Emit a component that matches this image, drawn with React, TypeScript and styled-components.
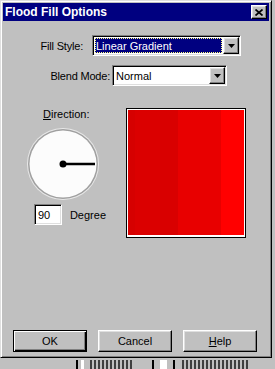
import React from "react";
import styled, { createGlobalStyle, css } from "styled-components";

const GlobalStyle = createGlobalStyle`
  html, body {
    margin: 0;
    padding: 0;
    background: #c0c0c0;
  }
  body {
    font-family: "Liberation Sans", Arial, sans-serif;
    font-size: 11px;
    color: #000;
  }
`;

const raised = css`
  border-top: 1px solid #fff;
  border-left: 1px solid #fff;
  border-right: 1px solid #000;
  border-bottom: 1px solid #000;
  box-shadow: inset -1px -1px #808080, inset 1px 1px #dfdfdf;
`;

const sunken = css`
  border-top: 1px solid #808080;
  border-left: 1px solid #808080;
  border-right: 1px solid #fff;
  border-bottom: 1px solid #fff;
  box-shadow: inset 1px 1px #000, inset -1px -1px #dfdfdf;
`;

const Screen = styled.div`
  width: 275px;
  height: 369px;
  overflow: hidden;
  display: flex;
  flex-direction: column;
`;

const Window = styled.div`
  width: 272px;
  height: 358px;
  flex: none;
  box-sizing: border-box;
  background: #c0c0c0;
  border-top: 1px solid #dfdfdf;
  border-left: 1px solid #dfdfdf;
  border-right: 1px solid #000;
  border-bottom: 1px solid #000;
  box-shadow: inset 1px 1px #fff, inset -1px -1px #808080;
  padding: 2px;
  display: flex;
  flex-direction: column;
`;

const TitleBar = styled.div`
  height: 18px;
  flex: none;
  background: #000080;
  color: #fff;
  display: flex;
  align-items: center;
  justify-content: space-between;
  padding: 0 2px 0 2px;
`;

const Title = styled.span`
  font-weight: bold;
  font-size: 12px;
`;

const CloseButton = styled.div`
  width: 16px;
  height: 14px;
  box-sizing: border-box;
  background: #c0c0c0;
  ${raised};
  display: flex;
  align-items: center;
  justify-content: center;
  padding-right: 1px;
`;

const Body = styled.div`
  flex: 1;
  display: flex;
  flex-direction: column;
  padding: 14px 0 3px 0;
`;

const Row = styled.div<{ $gap: number; $top?: number }>`
  display: flex;
  align-items: center;
  gap: ${(p) => p.$gap}px;
  margin-top: ${(p) => p.$top ?? 0}px;
`;

const Label = styled.span<{ $w: number }>`
  width: ${(p) => p.$w}px;
  text-align: right;
  white-space: nowrap;
  letter-spacing: -0.2px;
`;

const Field = styled.div<{ $w: number }>`
  width: ${(p) => p.$w}px;
  height: 21px;
  box-sizing: border-box;
  background: #fff;
  ${sunken};
  padding: 1px;
  display: flex;
`;

const Value = styled.div<{ $selected?: boolean }>`
  flex: 1;
  margin: 1px;
  padding-left: 1px;
  display: flex;
  align-items: center;
  white-space: nowrap;
  box-sizing: border-box;
  ${(p) =>
    p.$selected &&
    css`
      background: #000080;
      color: #fff;
      outline: 1px dotted #ffff80;
      outline-offset: -1px;
    `}
`;

const DropButton = styled.div`
  width: 16px;
  box-sizing: border-box;
  background: #c0c0c0;
  ${raised};
  display: flex;
  align-items: center;
  justify-content: center;
`;

const Lower = styled.div`
  display: flex;
  margin-top: 22px;
  padding-left: 23px;
  gap: 20px;
`;

const DirColumn = styled.div`
  width: 80px;
  display: flex;
  flex-direction: column;
`;

const DirLabel = styled.div`
  padding-left: 17px;
  line-height: 12px;
  height: 12px;
`;

const Dial = styled.svg`
  display: block;
  margin-top: 7px;
`;

const DegreeRow = styled.div`
  display: flex;
  align-items: center;
  gap: 8px;
  margin-top: 3px;
  padding-left: 8px;
`;

const DegreeInput = styled.div`
  width: 29px;
  height: 21px;
  box-sizing: border-box;
  background: #fff;
  ${sunken};
  padding-left: 3px;
  display: flex;
  align-items: center;
`;

const Preview = styled.div`
  width: 120px;
  height: 130px;
  box-sizing: border-box;
  border: 1px solid #000;
  padding: 1px 1px 2px 1px;
  background: #fff;
  display: flex;
`;

const Swatch = styled.div`
  flex: 1;
  background: linear-gradient(
    to right,
    #d60000 0px,
    #d60000 7px,
    #db0000 7px,
    #db0000 32px,
    #d90000 32px,
    #d90000 50px,
    #e80000 50px,
    #e80000 93px,
    #ff0000 93px,
    #ff0000 100%
  );
`;

const Footer = styled.div`
  margin-top: auto;
  display: flex;
  padding-left: 10px;
  gap: 11px;
`;

const Button = styled.div<{ $default?: boolean }>`
  width: 74px;
  height: 22px;
  box-sizing: border-box;
  background: #c0c0c0;
  display: flex;
  align-items: center;
  justify-content: center;
  ${(p) =>
    p.$default
      ? css`
          border: 1px solid #000;
          box-shadow: inset 1px 1px #fff, inset -1px -1px #000,
            inset -2px -2px #808080;
        `
      : raised};
`;

const Strip = styled.div`
  flex: 1;
  display: flex;
  align-items: stretch;
  padding-top: 2px;
`;

const Mark = styled.div<{ $w: number; $c: string; $dots?: boolean }>`
  width: ${(p) => p.$w}px;
  flex: none;
  background: ${(p) =>
    p.$dots
      ? `repeating-linear-gradient(to right, ${p.$c} 0 2px, transparent 2px 4px)`
      : p.$c};
`;

const stripMarks: { w: number; c: string; dots?: boolean }[] = [
  { w: 76, c: "transparent" },
  { w: 2, c: "#000" },
  { w: 3, c: "transparent" },
  { w: 3, c: "#fff" },
  { w: 6, c: "transparent" },
  { w: 42, c: "#404040", dots: true },
  { w: 20, c: "transparent" },
  { w: 2, c: "#000" },
  { w: 6, c: "transparent" },
  { w: 7, c: "#fff" },
  { w: 6, c: "transparent" },
  { w: 2, c: "#000" },
  { w: 7, c: "transparent" },
  { w: 66, c: "#404040", dots: true },
];

const CloseIcon = () => (
  <svg width="8" height="7" viewBox="0 0 8 7">
    <path d="M0.5 0.5 L7.5 6.5 M7.5 0.5 L0.5 6.5" stroke="#000" strokeWidth="1.7" />
  </svg>
);

const Arrow = () => (
  <svg width="7" height="4" viewBox="0 0 7 4">
    <polygon points="0,0 7,0 3.5,4" fill="#000" />
  </svg>
);

export default function App() {
  const angle = 90;
  const rad = ((angle - 90) * Math.PI) / 180;
  const cx = 37;
  const cy = 37;
  const len = 32;

  return (
    <Screen>
      <GlobalStyle />
      <Window>
        <TitleBar>
          <Title>Flood Fill Options</Title>
          <CloseButton>
            <CloseIcon />
          </CloseButton>
        </TitleBar>
        <Body>
          <Row $gap={9}>
            <Label $w={80}>Fill Style:</Label>
            <Field $w={149}>
              <Value $selected>Linear Gradient</Value>
              <DropButton>
                <Arrow />
              </DropButton>
            </Field>
          </Row>
          <Row $gap={2} $top={9}>
            <Label $w={107}>Blend Mode:</Label>
            <Field $w={115}>
              <Value>Normal</Value>
              <DropButton>
                <Arrow />
              </DropButton>
            </Field>
          </Row>
          <Lower>
            <DirColumn>
              <DirLabel>
                <u>D</u>irection:
              </DirLabel>
              <Dial width="74" height="74" viewBox="0 0 74 74">
                <circle cx={cx} cy={cy} r="36" fill="#e8e8e8" />
                <circle cx={cx} cy={cy} r="35" fill="#a0a0a0" />
                <circle cx={cx} cy={cy} r="33.5" fill="#fcfcfc" />
                <line
                  x1={cx}
                  y1={cy}
                  x2={cx + len * Math.cos(rad)}
                  y2={cy + len * Math.sin(rad)}
                  stroke="#000"
                  strokeWidth="2.5"
                />
                <circle cx={cx} cy={cy} r="3.5" fill="#000" />
              </Dial>
              <DegreeRow>
                <DegreeInput>{angle}</DegreeInput>
                <span>Degree</span>
              </DegreeRow>
            </DirColumn>
            <Preview>
              <Swatch />
            </Preview>
          </Lower>
          <Footer>
            <Button $default>OK</Button>
            <Button>Cancel</Button>
            <Button>
              <span>
                <u>H</u>elp
              </span>
            </Button>
          </Footer>
        </Body>
      </Window>
      <Strip>
        {stripMarks.map((m, i) => (
          <Mark key={i} $w={m.w} $c={m.c} $dots={m.dots} />
        ))}
      </Strip>
    </Screen>
  );
}
